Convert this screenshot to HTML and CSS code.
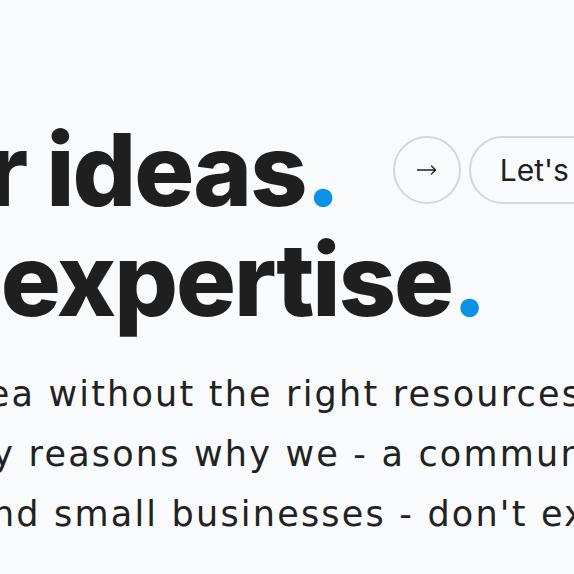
FILE: index.html
```html
<!DOCTYPE html>
<html lang="en">
<head>
<meta charset="utf-8">
<title>Your ideas. Our expertise.</title>
<link rel="stylesheet" href="styles.css">
</head>
<body>
<section class="hero">
  <h1 class="headline">
    <span class="headline-row">
      <span class="line">Your ideas<span class="dot">.</span></span>
      <span class="actions">
        <a class="circle-btn" href="#" aria-label="Next">
          <svg viewBox="0 0 24 24" width="24" height="24" aria-hidden="true"><path d="M2.5 12h18M16.5 8l4 4-4 4" fill="none" stroke="#1f1f1f" stroke-width="1.3" stroke-linecap="round" stroke-linejoin="round"/></svg>
        </a>
        <a class="pill-btn" href="#">Let's talk</a>
      </span>
    </span>
    <span class="line">Our expertise<span class="dot">.</span></span>
  </h1>
  <p class="intro">
    <span class="intro-line">To have your idea without the right resources to</span>
    <span class="intro-line">One of the many reasons why we - a community</span>
    <span class="intro-line">of developers and small businesses - don't exist</span>
  </p>
</section>
</body>
</html>
```
FILE: styles.css
```css
html, body {
  margin: 0;
  padding: 0;
  background: #f9fafc;
  overflow: hidden;
}
body {
  width: 574px;
  height: 574px;
  font-family: "Inter", "Liberation Sans", sans-serif;
  color: #1f1f1f;
}
.hero {
  padding-top: 115px;
}
.headline {
  margin: 0 0 0 -196px;
  font-size: 100px;
  font-weight: 800;
  line-height: 110px;
  letter-spacing: -2px;
  white-space: nowrap;
}
.headline-row {
  display: flex;
  align-items: center;
  gap: 54px;
}
.line { display: block; }
.dot { color: #0b93e6; }
.actions {
  display: flex;
  align-items: center;
  gap: 8px;
  letter-spacing: 0;
}
.circle-btn {
  box-sizing: border-box;
  width: 68px;
  height: 68px;
  border: 2px solid #d6d6d6;
  border-radius: 50%;
  display: flex;
  align-items: center;
  justify-content: center;
  text-decoration: none;
}
.pill-btn {
  box-sizing: border-box;
  height: 68px;
  border: 2px solid #d6d6d6;
  border-radius: 34px;
  display: flex;
  align-items: center;
  padding: 0 29px;
  font-size: 30px;
  font-weight: 400;
  color: #1f1f1f;
  text-decoration: none;
}
.intro {
  margin: 29px 0 0 -312px;
  font-family: "DejaVu Sans", "Inter", sans-serif;
  font-size: 35px;
  letter-spacing: 2.2px;
  line-height: 60px;
  font-weight: 400;
  color: #222;
  white-space: nowrap;
}
.intro-line { display: block; }
```
